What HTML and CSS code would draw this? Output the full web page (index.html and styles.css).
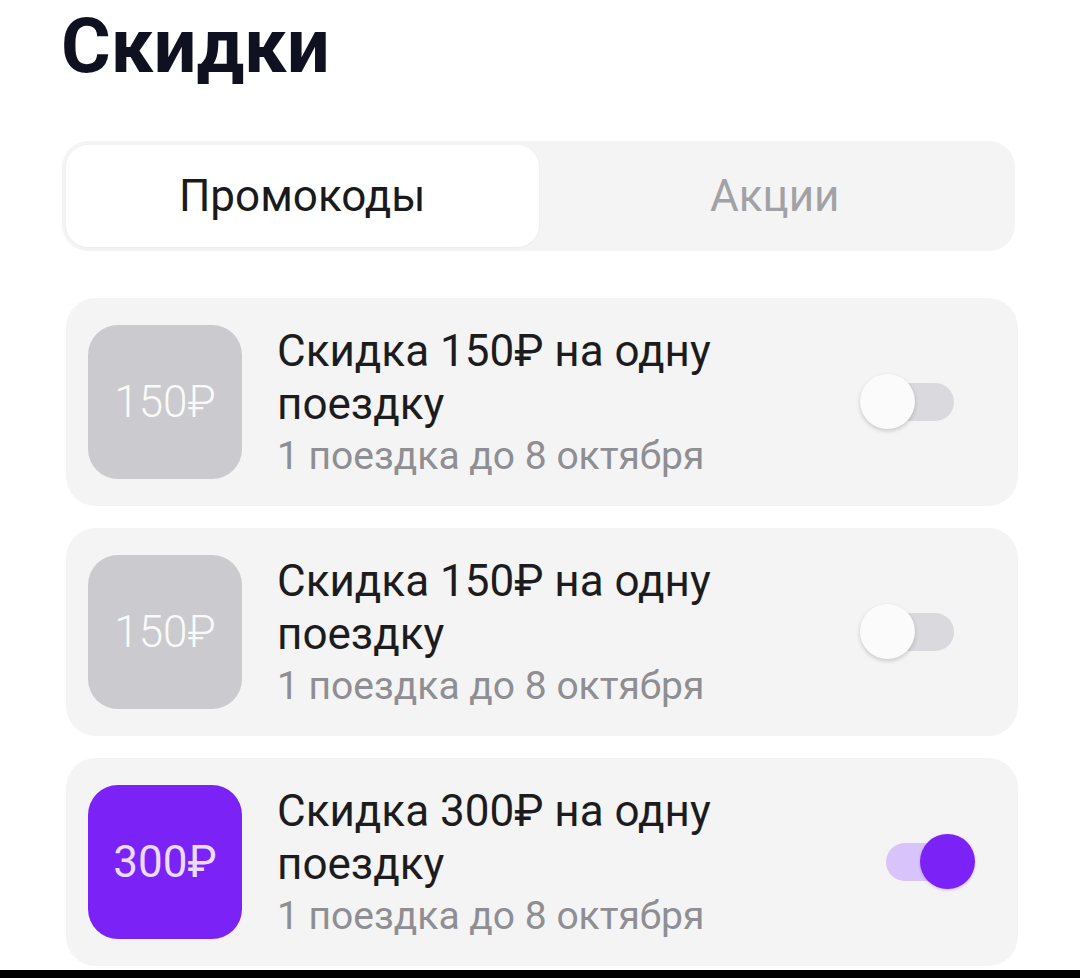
FILE: index.html
```html
<!DOCTYPE html>
<html lang="ru">

<head>
    <meta charset="UTF-8">
    <meta name="viewport" content="width=device-width, initial-scale=1.0">
    <title>Скидки</title>
    <link rel="stylesheet" href="styles.css">
</head>

<body>
    <div class="screen">
        <h1 class="title">Скидки</h1>

        <div class="tabs">
            <div class="tab active">Промокоды</div>
            <div class="tab">Акции</div>
        </div>

        <div class="list">
            <div class="promo">
                <div class="badge">150₽</div>
                <div class="info">
                    <div class="name">Скидка 150₽ на одну<br>поездку</div>
                    <div class="meta">1 поездка до 8 октября</div>
                </div>
                <div class="toggle"><span class="track"></span><span class="knob"></span></div>
            </div>

            <div class="promo">
                <div class="badge">150₽</div>
                <div class="info">
                    <div class="name">Скидка 150₽ на одну<br>поездку</div>
                    <div class="meta">1 поездка до 8 октября</div>
                </div>
                <div class="toggle"><span class="track"></span><span class="knob"></span></div>
            </div>

            <div class="promo">
                <div class="badge on">300₽</div>
                <div class="info">
                    <div class="name">Скидка 300₽ на одну<br>поездку</div>
                    <div class="meta">1 поездка до 8 октября</div>
                </div>
                <div class="toggle on"><span class="track"></span><span class="knob"></span></div>
            </div>
        </div>

        <div class="bottom-bar"></div>
    </div>
</body>

</html>
```

FILE: styles.css
```css
body {
    margin: 0;
    background-color: white;
    font-family: Roboto, 'Noto Sans', 'DejaVu Sans', sans-serif;
    color: #1c1c1e;
}

.screen {
    height: 978px;
    display: flex;
    flex-direction: column;
    overflow: hidden;
}

.title {
    margin: 0 0 0 61px;
    font-size: 76px;
    line-height: 92px;
    font-weight: bold;
    color: #0f1020;
}

.tabs {
    margin: 49px 65px 0 62px;
    height: 110px;
    padding: 4px;
    box-sizing: border-box;
    display: flex;
    background-color: #f4f4f4;
    border-radius: 26px;
}

.tab {
    flex: 1;
    display: flex;
    align-items: center;
    justify-content: center;
    font-size: 44px;
    color: #a2a2a6;
    border-radius: 22px;
}

.tab.active {
    background-color: white;
    color: #1a1a1c;
    box-shadow: 0 1px 3px rgba(0, 0, 0, 0.04);
}

.list {
    margin: 47px 62px 0 66px;
    display: flex;
    flex-direction: column;
    gap: 22px;
}

.promo {
    height: 208px;
    display: flex;
    align-items: center;
    padding: 0 43px 0 22px;
    background-color: #f4f4f4;
    border-radius: 30px;
}

.badge {
    width: 154px;
    height: 154px;
    flex-shrink: 0;
    display: flex;
    align-items: center;
    justify-content: center;
    background-color: #cbcbcf;
    border-radius: 30px;
    color: rgba(255, 255, 255, 0.92);
    font-size: 44px;
    font-weight: 300;
}

.badge.on {
    background-color: #7b22f6;
    color: #eadcff;
    font-weight: normal;
}

.info {
    flex: 1;
    margin-left: 35px;
}

.name {
    font-size: 44px;
    line-height: 53px;
}

.meta {
    margin-top: 3px;
    font-size: 39px;
    line-height: 45px;
    color: #8e8e93;
}

.toggle {
    position: relative;
    width: 115px;
    height: 56px;
    flex-shrink: 0;
}

.track {
    position: absolute;
    left: 18px;
    top: 9px;
    width: 76px;
    height: 38px;
    border-radius: 19px;
    background-color: #d9d9de;
}

.knob {
    position: absolute;
    left: 0;
    top: 0;
    width: 55px;
    height: 55px;
    border-radius: 50%;
    background-color: #fbfbfb;
    box-shadow: 0 2px 4px rgba(0, 0, 0, 0.18);
}

.toggle.on .track {
    left: 26px;
    background-color: #d8c4fa;
}

.toggle.on .knob {
    left: auto;
    right: 0;
    background-color: #7b22f6;
    box-shadow: 0 1px 3px rgba(123, 34, 246, 0.3);
}

.bottom-bar {
    margin-top: auto;
    height: 8px;
    background-color: black;
}
```
